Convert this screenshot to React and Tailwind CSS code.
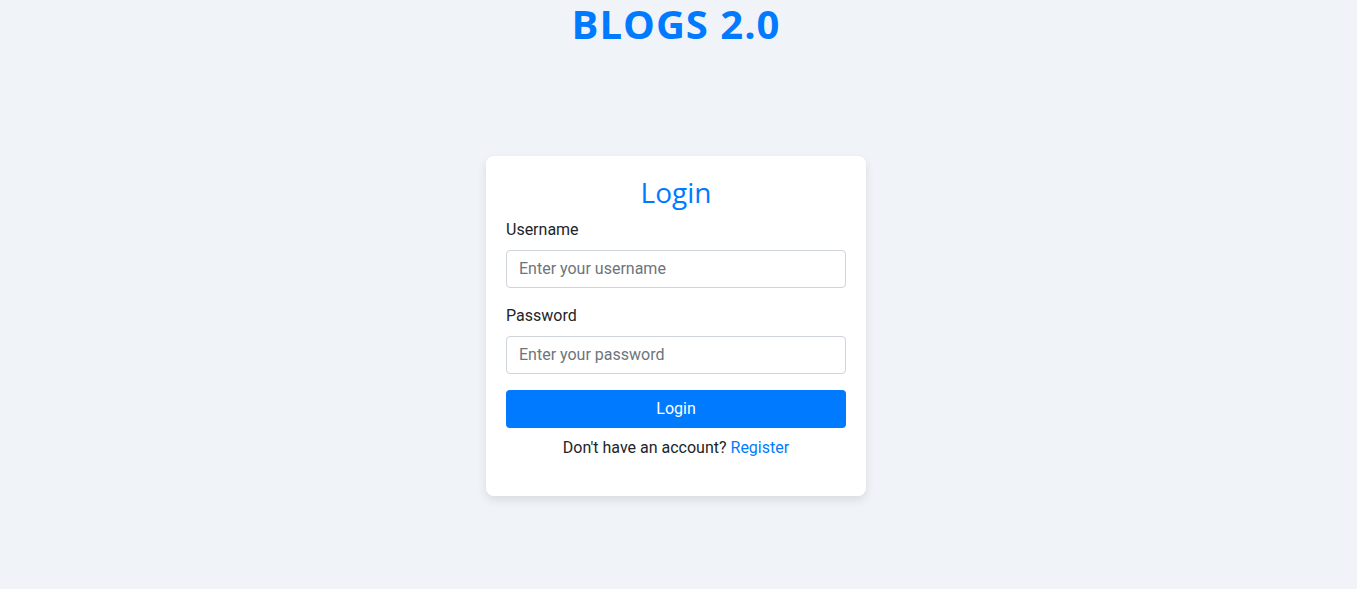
import React from 'react';

const App = () => {
  return (
    <div className="min-h-screen bg-[#f0f4f8] font-['Roboto',sans-serif] text-[#212529] pr-[5px]">
      <h1 className="text-center text-[40px] leading-[1.2] font-bold tracking-[1px] text-[#007bff] font-['Open_Sans',sans-serif]">
        BLOGS 2.0
      </h1>
      <div className="flex justify-center pt-[108px]">
        <div className="w-[380px] bg-white rounded-lg shadow-[0_4px_10px_rgba(0,0,0,0.1)] px-5 pt-5 pb-5">
          <h2 className="text-center text-[28px] leading-[1.2] text-[#007bff] mb-2 font-['Open_Sans',sans-serif]">
            Login
          </h2>
          <form onSubmit={(e) => e.preventDefault()}>
            <div className="mb-4">
              <label className="block text-base leading-6 mb-2">Username</label>
              <input
                type="text"
                placeholder="Enter your username"
                className="block w-full h-[38px] px-3 border border-[#ced4da] rounded text-base placeholder:text-[#6c757d] outline-none"
              />
            </div>
            <div className="mb-4">
              <label className="block text-base leading-6 mb-2">Password</label>
              <input
                type="password"
                placeholder="Enter your password"
                className="block w-full h-[38px] px-3 border border-[#ced4da] rounded text-base placeholder:text-[#6c757d] outline-none"
              />
            </div>
            <button
              type="submit"
              className="block w-full h-[38px] bg-[#007bff] text-white text-base rounded font-normal"
            >
              Login
            </button>
          </form>
          <p className="text-center text-base leading-6 mt-2 mb-4">
            Don't have an account? <a href="#" className="text-[#007bff]">Register</a>
          </p>
        </div>
      </div>
    </div>
  );
};

export default App;
